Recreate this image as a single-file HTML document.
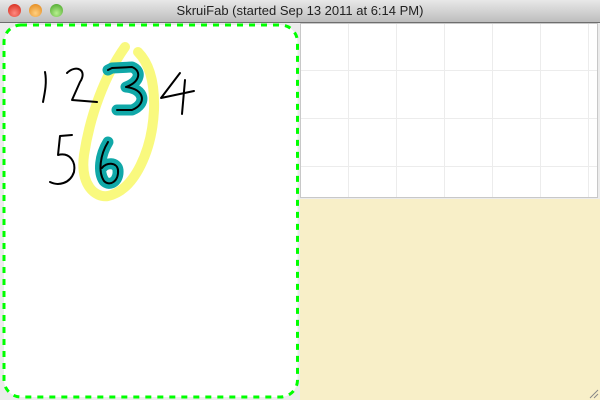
<!DOCTYPE html>
<html><head><style>
body{margin:0;width:600px;height:400px;overflow:hidden;font-family:"Liberation Sans",sans-serif;background:#ececec;position:relative}
.tb{position:absolute;left:0;top:0;width:600px;height:22px;background:linear-gradient(#e8e8e8,#bdbdbd);border-bottom:1px solid #6e6e6e;text-align:center;font-size:13px;line-height:22px;color:#222}
.b{position:absolute;top:4px;width:13px;height:13px;border-radius:50%}
.grid{position:absolute;left:300px;top:23px;width:296px;height:173px;border:1px solid #c8c8c8;background-color:#fff;
background-image:linear-gradient(90deg,#ececec 1px,transparent 1px),linear-gradient(#ececec 1px,transparent 1px);background-size:48px 48px;background-position:47px 46px}
.yel{position:absolute;left:300px;top:199px;width:300px;height:201px;background:#f8efc8}
</style></head><body>
<div class="tb">SkruiFab (started Sep 13 2011 at 6:14 PM)
<div class="b" style="left:8px;background:radial-gradient(circle at 50% 70%,#ff8a80,#d02010)"></div>
<div class="b" style="left:29px;background:radial-gradient(circle at 50% 70%,#ffd080,#e08010)"></div>
<div class="b" style="left:50px;background:radial-gradient(circle at 50% 70%,#b8f090,#40a020)"></div>
</div>
<div class="grid"></div>
<div class="yel"></div>
<svg style="position:absolute;left:0;top:0" width="600" height="400">
<rect x="4" y="25" width="293.5" height="372" rx="17" fill="#fff" stroke="#00ff00" stroke-width="3" stroke-dasharray="6,6"/>
<g fill="none" stroke-linecap="round" stroke-linejoin="round">
<path d="M125,47 C105,75 90,115 84,155 C80,185 95,198 108,196 C135,190 152,150 154,110 C155,80 148,62 138,52" stroke="#f8f870" stroke-width="10" opacity="0.9"/>
<path d="M108,70 L112,68 L132,67 C142,71 140,82 126,87 C145,89 147,104 132,110 L117,110" stroke="#10a8a8" stroke-width="11"/>
<path d="M108,142 C100,155 98,172 104,181 C110,187 119,181 118,170 C117,162 106,162 102,168" stroke="#10a8a8" stroke-width="11"/>
<path d="M108,70 L112,68 L132,67 C142,71 140,82 126,87 C145,89 147,104 132,110 L117,110" stroke="#000" stroke-width="2"/>
<path d="M108,142 C100,155 98,172 104,181 C110,187 119,181 118,170 C117,162 106,162 102,168" stroke="#000" stroke-width="2"/>
<path d="M45,72 C47,82 45,92 43,102" stroke="#000" stroke-width="2"/>
<path d="M67,73 C76,64 88,70 80,82 L72,100 L97,102" stroke="#000" stroke-width="2"/>
<path d="M180,73 L161,98 L194,91 M185,80 L182,114" stroke="#000" stroke-width="2"/>
<path d="M72,135 L60,136 L58,155 C70,152 76,162 74,172 C70,184 58,186 50,182" stroke="#000" stroke-width="2"/>
</g>
<path d="M590,398 L598,390 M594,398 L598,394" stroke="#888" stroke-width="1"/>
</svg>
</body></html>
